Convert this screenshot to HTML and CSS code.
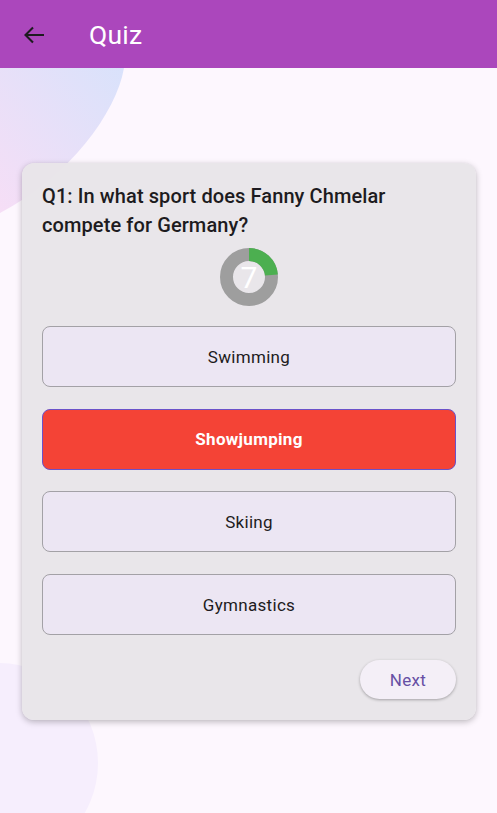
FILE: index.html
```html
<!DOCTYPE html>
<html>
<head>
<meta charset="utf-8">
<link rel="stylesheet" href="styles.css">
</head>
<body>
<div class="app">
  <header class="appbar">
    <svg class="back" viewBox="0 0 22 18" width="22" height="18"><path d="M21 9H2.5M10 1.5L2.5 9L10 16.5" fill="none" stroke="#1d1b20" stroke-width="2.1"/></svg>
    <span class="title">Quiz</span>
  </header>
  <div class="body">
    <svg class="blob-top" viewBox="0 0 130 150" width="130" height="150">
      <defs>
        <linearGradient id="g1" x1="0" y1="1" x2="1" y2="0">
          <stop offset="0" stop-color="#f6def6"/>
          <stop offset="1" stop-color="#d9e2fb"/>
        </linearGradient>
      </defs>
      <path d="M0 0 L124 0 C116 45 70 108 0 145 Z" fill="url(#g1)"/>
    </svg>
    <div class="blob-bottom"></div>
    <main class="card">
      <h1 class="question">Q1: In what sport does Fanny Chmelar compete for Germany?</h1>
      <div class="timer">
        <svg viewBox="0 0 58 58" width="58" height="58">
          <circle cx="29" cy="29" r="22.5" fill="none" stroke="#9e9e9e" stroke-width="13"/>
          <circle cx="29" cy="29" r="22.5" fill="none" stroke="#4caf50" stroke-width="13" stroke-dasharray="33 200" transform="rotate(-90 29 29)"/>
        </svg>
        <span class="count">7</span>
      </div>
      <div class="options">
        <button class="option">Swimming</button>
        <button class="option selected">Showjumping</button>
        <button class="option">Skiing</button>
        <button class="option">Gymnastics</button>
      </div>
      <div class="actions">
        <button class="next">Next</button>
      </div>
    </main>
  </div>
</div>
</body>
</html>
```
FILE: styles.css
```css
* { box-sizing: border-box; }
html, body { margin: 0; padding: 0; }
body {
  font-family: Roboto, "Noto Sans", sans-serif;
  background: #fdf7fe;
  width: 497px;
  height: 813px;
  overflow: hidden;
}
.app { position: relative; height: 813px; }
.appbar {
  height: 68px;
  background: #ab47bc;
  display: flex;
  align-items: center;
  padding-left: 23px;
  position: relative;
  z-index: 2;
}
.back { display: block; margin-right: 44px; margin-top: 1px; }
.title { color: #fff; font-size: 26.5px; font-weight: 400; letter-spacing: 0.2px; }
.body {
  position: relative;
  height: 745px;
  overflow: hidden;
  padding: 95px 21px 0 22px;
}
.blob-top { position: absolute; left: 0; top: 0; display: block; }
.blob-bottom {
  position: absolute;
  left: -100px;
  top: 595px;
  width: 198px;
  height: 200px;
  border-radius: 50%;
  background: #f6eefd;
}
.card {
  position: relative;
  z-index: 1;
  background: rgba(232, 229, 233, 0.96);
  border-radius: 12px;
  box-shadow: 0 2px 6px rgba(0,0,0,0.25), 0 0 1px rgba(0,0,0,0.1);
  padding: 19px 20px 20px 20px;
  height: 557px;
}
.question {
  margin: 0;
  font-size: 20px;
  font-weight: 500;
  line-height: 29px;
  color: #1d1b20;
  letter-spacing: 0.1px;
}
.timer {
  position: relative;
  width: 58px;
  height: 58px;
  margin: 8px auto 0;
}
.timer svg { display: block; }
.count {
  position: absolute;
  inset: 0;
  display: flex;
  align-items: center;
  justify-content: center;
  color: #fff;
  font-size: 30px;
  font-weight: 400;
}
.options {
  display: flex;
  flex-direction: column;
  gap: 21.7px;
  margin-top: 20px;
}
.option {
  height: 61px;
  border: 1.5px solid #a3a1a6;
  border-radius: 8px;
  background: #ece6f3;
  font-family: Roboto, sans-serif;
  font-size: 17px;
  color: #1d1b20;
  letter-spacing: 0.3px;
}
.option.selected {
  background: #f44336;
  border-color: #6b52c9;
  color: #fff;
  font-weight: 700;
}
.actions {
  display: flex;
  justify-content: flex-end;
  margin-top: 25px;
}
.next {
  width: 96px;
  height: 39px;
  border: none;
  border-radius: 20px;
  background: #f4eff7;
  color: #6750a4;
  font-family: Roboto, sans-serif;
  font-size: 17px;
  letter-spacing: 0.3px;
  box-shadow: 0 1px 3px rgba(0,0,0,0.3);
}
```
